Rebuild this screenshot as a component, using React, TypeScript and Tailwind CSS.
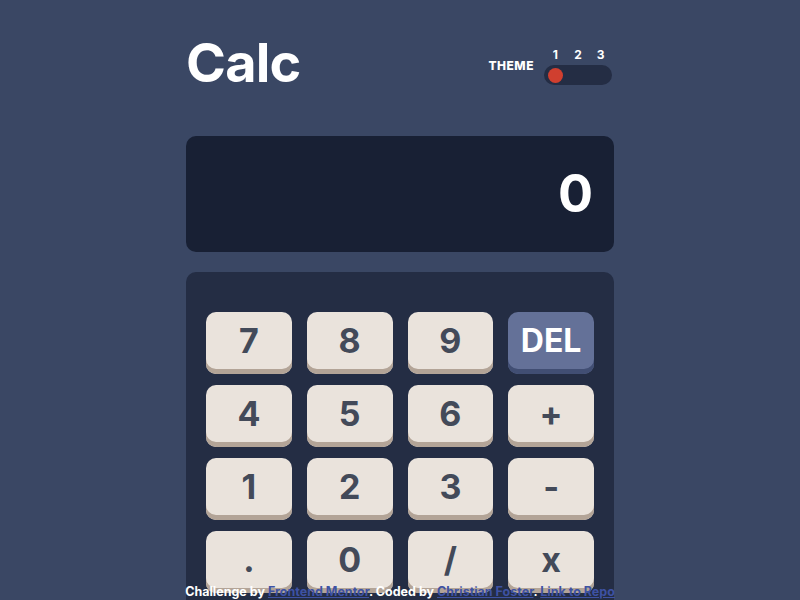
import React from "react";

const keys: { label: string; kind?: "del" }[] = [
  { label: "7" }, { label: "8" }, { label: "9" }, { label: "DEL", kind: "del" },
  { label: "4" }, { label: "5" }, { label: "6" }, { label: "+" },
  { label: "1" }, { label: "2" }, { label: "3" }, { label: "-" },
  { label: "." }, { label: "0" }, { label: "/" }, { label: "x" },
];

export default function App() {
  return (
    <div
      className="relative h-screen w-full overflow-hidden bg-[#3a4764] text-white"
      style={{ fontFamily: "Inter, 'Noto Sans', sans-serif" }}
    >
      <div className="mx-auto w-[428px] pt-[36px]">
        <header className="flex h-[54px] items-end justify-between">
          <h1 className="text-[54px] font-bold leading-none tracking-[-0.8px] text-white">Calc</h1>
          <div className="mb-[5px] flex items-end gap-[10px] pr-[2px]">
            <span className="mb-[13px] text-[12px] font-extrabold leading-[12px] tracking-[0.5px]">THEME</span>
            <div className="flex w-[68px] flex-col gap-[4px]">
              <div className="grid grid-cols-3 text-center text-[12px] font-bold leading-[12px]">
                <span>1</span>
                <span>2</span>
                <span>3</span>
              </div>
              <div className="flex h-[20px] items-center rounded-full bg-[#242d44] px-[4px]">
                <div className="h-[15px] w-[15px] rounded-full bg-[#d03f2f]" />
              </div>
            </div>
          </div>
        </header>

        <div className="mt-[46px] flex h-[116px] items-center justify-end rounded-[10px] bg-[#182034] pr-[21px]">
          <span className="text-[52px] font-bold leading-none">0</span>
        </div>

        <div className="mt-[20px] h-[400px] rounded-[10px] bg-[#242d44] px-[20px] pt-[40px]">
          <div className="grid grid-cols-4 gap-x-[15px] gap-y-[11px]">
            {keys.map((k) => (
              <button
                key={k.label}
                className={
                  k.kind === "del"
                    ? "flex h-[62px] items-center justify-center rounded-[10px] bg-[#647198] pb-[5px] text-[32px] font-bold leading-none text-white shadow-[inset_0_-5px_0_#414e73]"
                    : "flex h-[62px] items-center justify-center rounded-[10px] bg-[#eae3dc] pb-[5px] text-[34px] font-bold leading-none text-[#434a59] shadow-[inset_0_-5px_0_#b3a497]"
                }
              >
                {k.label}
              </button>
            ))}
          </div>
        </div>
      </div>

      <p className="absolute bottom-[1px] left-0 w-full text-center text-[12.5px] font-bold leading-[15px] text-white">
        Challenge by{" "}
        <a className="text-[#3e52a3] underline" href="#">Frontend Mentor</a>. Coded by{" "}
        <a className="text-[#3e52a3] underline" href="#">Christian Foster</a>.{" "}
        <a className="text-[#3e52a3] underline" href="#">Link to Repo</a>
      </p>
    </div>
  );
}
